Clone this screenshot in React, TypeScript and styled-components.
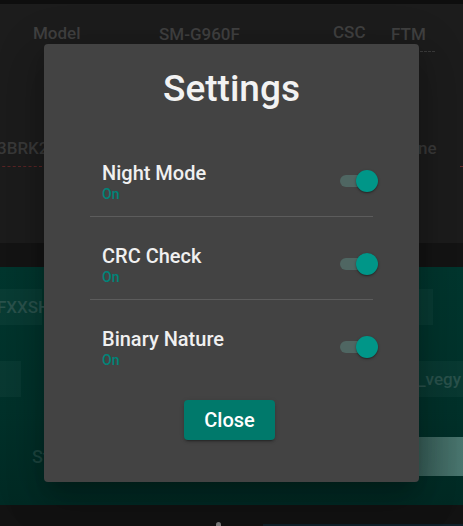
import React from "react";
import styled, { createGlobalStyle } from "styled-components";

const Global = createGlobalStyle`
  html, body { margin: 0; padding: 0; background: #121212; }
  body { font-family: Roboto, "Noto Sans", Arial, sans-serif; }
  * { box-sizing: border-box; }
`;

const Page = styled.div`
  width: 463px;
  height: 526px;
  overflow: hidden;
  position: relative;
  display: flex;
  flex-direction: column;
  background: #121212;
`;

const TopStrip = styled.div`
  height: 4px;
  background: #0e0e0e;
`;

const InfoPanel = styled.div`
  height: 239px;
  background: #1c1c1c;
  padding-top: 19px;
  display: flex;
  flex-direction: column;
`;

const InfoRow = styled.div`
  display: grid;
  grid-template-columns: 126px 174px 58px auto;
  padding-left: 33px;
  font-size: 17px;
  font-weight: 500;
  line-height: 20px;
  color: #404040;
`;

const Cell = styled.span<{ $drop?: number }>`
  margin-top: ${(p) => p.$drop ?? 0}px;
  white-space: nowrap;
`;

const DotRow = styled.div`
  display: flex;
  justify-content: flex-end;
  padding-right: 28px;
  margin-top: 7px;
`;

const Dots = styled.div<{ $w: number; $color: string }>`
  width: ${(p) => p.$w}px;
  border-top: 1px dashed ${(p) => p.$color};
`;

const MidRow = styled.div`
  display: flex;
  justify-content: space-between;
  margin-top: 86px;
  font-size: 17px;
  font-weight: 500;
  line-height: 20px;
  color: #393939;
`;

const MidLeft = styled.div`
  display: flex;
  flex-direction: column;
  gap: 8px;
  margin-left: -3px;
`;

const MidRight = styled.div`
  display: flex;
  flex-direction: column;
  align-items: flex-end;
  gap: 8px;
  width: 45px;
`;

const MidRightText = styled.span`
  align-self: flex-start;
`;

const Band = styled.div`
  height: 24px;
  background: #141414;
`;

const TealArea = styled.div`
  height: 238px;
  background: linear-gradient(180deg, #00362e 0%, #00312a 60%, #002a24 100%);
  padding-top: 22px;
  display: flex;
  flex-direction: column;
`;

const TealRow = styled.div<{ $h: number; $mt: number }>`
  height: ${(p) => p.$h}px;
  margin-top: ${(p) => p.$mt}px;
  display: flex;
  justify-content: space-between;
  align-items: stretch;
`;

const Field = styled.div<{ $w: number; $mr?: number; $light?: boolean }>`
  width: ${(p) => p.$w}px;
  margin-right: ${(p) => p.$mr ?? 0}px;
  background: ${(p) =>
    p.$light
      ? "linear-gradient(90deg, #375d57 0%, #4a766f 100%)"
      : "rgba(255,255,255,0.035)"};
  color: ${(p) => (p.$light ? "#6a928c" : "#2a524c")};
  font-size: 17px;
  font-weight: 500;
  display: flex;
  align-items: center;
  white-space: nowrap;
  overflow: visible;
`;

const FieldText = styled.span<{ $ml: number }>`
  margin-left: ${(p) => p.$ml}px;
`;

const GhostText = styled.span<{ $ml: number }>`
  margin-left: ${(p) => p.$ml}px;
  color: #1d453f;
  font-size: 18px;
  font-weight: 500;
  align-self: center;
`;

const BottomBar = styled.div`
  flex: 1;
  background: #121212;
  display: flex;
  align-items: flex-end;
  padding-left: 216px;
  gap: 42px;
`;

const BottomDot = styled.div`
  width: 5px;
  height: 4px;
  border-radius: 3px 3px 0 0;
  background: #7a7a7a;
`;

const BottomBox = styled.div`
  flex: 1;
  height: 2px;
  background: #102029;
`;

/* ---------- modal ---------- */

const Overlay = styled.div`
  position: absolute;
  inset: 0;
  display: flex;
  align-items: center;
  justify-content: center;
`;

const Dialog = styled.div`
  width: 375px;
  height: 438px;
  background: #434343;
  border-radius: 4px;
  box-shadow: 0px 11px 15px -7px rgba(0, 0, 0, 0.2),
    0px 24px 38px 3px rgba(0, 0, 0, 0.14),
    0px 9px 46px 8px rgba(0, 0, 0, 0.12);
  display: flex;
  flex-direction: column;
  align-items: stretch;
  padding-top: 24px;
`;

const Title = styled.h2`
  margin: 0;
  font-size: 37px;
  line-height: 42px;
  font-weight: 500;
  text-align: center;
  color: #f2f2f2;
`;

const List = styled.div`
  margin: 24px 46px 0;
  display: flex;
  flex-direction: column;
`;

const Row = styled.div`
  display: flex;
  align-items: center;
  justify-content: space-between;
  padding: 28px 0 12px 12px;
`;

const Divider = styled.div`
  height: 1px;
  background: #5c5c5c;
`;

const Texts = styled.div`
  display: flex;
  flex-direction: column;
`;

const Primary = styled.span`
  font-size: 20px;
  line-height: 22px;
  font-weight: 500;
  color: #f0f0f0;
`;

const Secondary = styled.span`
  font-size: 14px;
  line-height: 20px;
  font-weight: 500;
  color: #00857a;
`;

const Switch = styled.span`
  position: relative;
  width: 38px;
  height: 22px;
  margin-right: -5px;
  margin-bottom: 4px;
  display: inline-block;
`;

const Track = styled.span`
  position: absolute;
  left: 0;
  top: 5px;
  width: 32px;
  height: 12px;
  border-radius: 6px;
  background: #4f6662;
`;

const Thumb = styled.span`
  position: absolute;
  right: 0;
  top: 0;
  width: 22px;
  height: 22px;
  border-radius: 50%;
  background: #009688;
  box-shadow: 0 1px 3px rgba(0, 0, 0, 0.3), 0 1px 1px rgba(0, 0, 0, 0.2);
`;

const Actions = styled.div`
  display: flex;
  justify-content: center;
  margin-top: 18px;
  padding-right: 4px;
`;

const CloseButton = styled.button`
  height: 40px;
  width: 91px;
  border: none;
  border-radius: 4px;
  background: #00796b;
  color: #ffffff;
  font-family: Roboto, "Noto Sans", Arial, sans-serif;
  font-size: 20px;
  font-weight: 500;
  padding: 0;
  box-shadow: 0px 3px 1px -2px rgba(0, 0, 0, 0.2),
    0px 2px 2px 0px rgba(0, 0, 0, 0.14), 0px 1px 5px 0px rgba(0, 0, 0, 0.12);
  cursor: pointer;
`;

const settings = [
  { name: "Night Mode", value: "On" },
  { name: "CRC Check", value: "On" },
  { name: "Binary Nature", value: "On" },
];

export default function App() {
  return (
    <>
      <Global />
      <Page>
        <TopStrip />
        <InfoPanel>
          <InfoRow>
            <Cell $drop={0}>Model</Cell>
            <Cell $drop={1}>SM-G960F</Cell>
            <Cell $drop={-1}>CSC</Cell>
            <Cell $drop={1}>FTM</Cell>
          </InfoRow>
          <DotRow>
            <Dots $w={15} $color="#3a3a3a" />
          </DotRow>
          <MidRow>
            <MidLeft>
              <span>3BRK2</span>
              <Dots $w={45} $color="#5a2424" />
            </MidLeft>
            <MidRight>
              <MidRightText>ne</MidRightText>
              <Dots $w={3} $color="#6a2a2a" />
            </MidRight>
          </MidRow>
        </InfoPanel>
        <Band />
        <TealArea>
          <TealRow $h={36} $mt={0}>
            <Field $w={42}>
              <FieldText $ml={-3}>FXXSH</FieldText>
            </Field>
            <Field $w={60} $mr={30} />
          </TealRow>
          <TealRow $h={36} $mt={36}>
            <Field $w={21} />
            <Field $w={45}>_vegy</Field>
          </TealRow>
          <TealRow $h={39} $mt={40}>
            <GhostText $ml={32}>Start</GhostText>
            <Field $w={45} $light>
              <FieldText $ml={-63}>Settings</FieldText>
            </Field>
          </TealRow>
        </TealArea>
        <BottomBar>
          <BottomDot />
          <BottomBox />
        </BottomBar>
        <Overlay>
          <Dialog>
            <Title>Settings</Title>
            <List>
              {settings.map((s, i) => (
                <React.Fragment key={s.name}>
                  {i > 0 && <Divider />}
                  <Row>
                    <Texts>
                      <Primary>{s.name}</Primary>
                      <Secondary>{s.value}</Secondary>
                    </Texts>
                    <Switch>
                      <Track />
                      <Thumb />
                    </Switch>
                  </Row>
                </React.Fragment>
              ))}
            </List>
            <Actions>
              <CloseButton>Close</CloseButton>
            </Actions>
          </Dialog>
        </Overlay>
      </Page>
    </>
  );
}
